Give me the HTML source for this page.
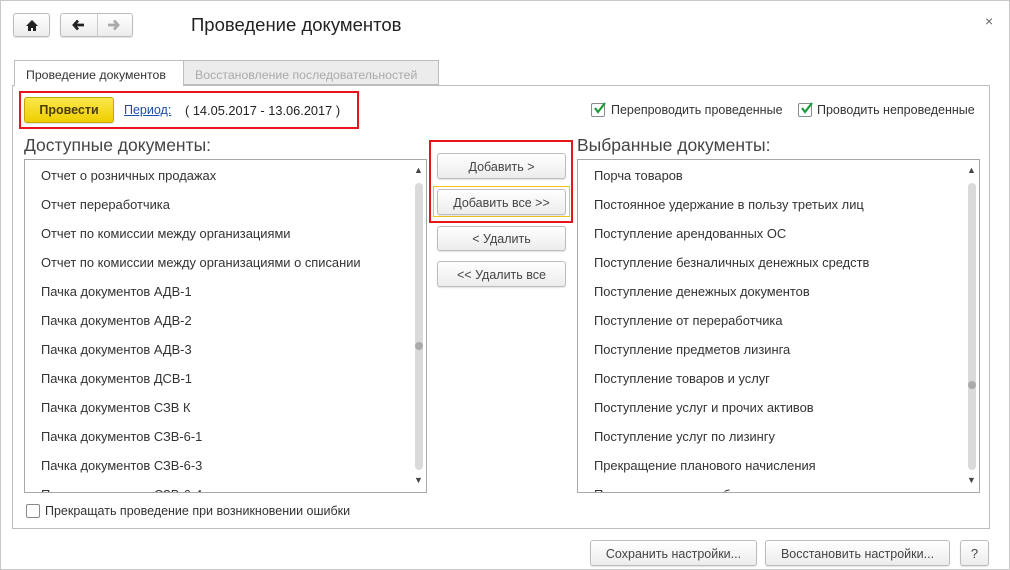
<!DOCTYPE html>
<html><head><meta charset="utf-8"><style>
*{box-sizing:border-box;margin:0;padding:0}
body{width:1010px;height:570px;background:#fff;font-family:"Liberation Sans",Arial,sans-serif;font-size:12.5px;color:#333;position:relative;overflow:hidden}
.abs{position:absolute}
.win{left:0;top:0;width:1010px;height:570px;border:1px solid #c8c8c8}
.btn{position:absolute;border:1px solid #bdbdbd;border-radius:3px;background:linear-gradient(#fff,#ececec);text-align:center;color:#444;box-shadow:0 1px 1px rgba(0,0,0,.12)}
.list{position:absolute;border:1px solid #a8a8a8;background:#fff;overflow:hidden;font-size:12.9px}
.list div{position:absolute;left:16px;white-space:nowrap;color:#333}
.sb{position:absolute;width:8px;background:#dadada;border-radius:4px}
.arr{position:absolute;font-size:9px;color:#444}
.cb{position:absolute;width:14px;height:14px;border:1px solid #8a8a8a;background:#fff;border-radius:2px}
</style></head><body>
<div class="abs win"></div>
<div class="btn" style="left:13px;top:13px;width:37px;height:24px"><svg width="14" height="13" viewBox="0 0 14 13" style="margin-top:5px"><path d="M7 1L1 7h2v5h3V9h2v3h3V7h2z" fill="#222"/></svg></div>
<div class="btn" style="left:60px;top:13px;width:73px;height:24px"></div>
<div class="abs" style="left:97px;top:14px;width:1px;height:22px;background:#ccc"></div>
<svg class="abs" style="left:71px;top:18px" width="16" height="14" viewBox="0 0 16 14"><path d="M7 2.5L3 7l4 4.5M3 7h10" stroke="#222" stroke-width="2.8" fill="none"/></svg>
<svg class="abs" style="left:105px;top:18px" width="16" height="14" viewBox="0 0 16 14"><path d="M9 2.5L13 7l-4 4.5M13 7H3" stroke="#aaa" stroke-width="2.8" fill="none"/></svg>
<div class="abs" style="left:191px;top:14px;font-size:18.5px;color:#222">Проведение документов</div>
<div class="abs" style="left:985px;top:13px;font-size:14px;color:#666">×</div>

<div class="abs" style="left:12px;top:85px;width:978px;height:444px;border:1px solid #bdbdbd"></div>
<div class="abs" style="left:14px;top:60px;width:170px;height:26px;border:1px solid #bdbdbd;border-bottom:none;background:#fff;padding:7px 0 0 11px;font-size:12.3px">Проведение документов</div>
<div class="abs" style="left:184px;top:60px;width:255px;height:25px;border:1px solid #bdbdbd;border-left:none;background:#ececec;padding:7px 0 0 11px;font-size:12.3px;color:#aaa">Восстановление последовательностей</div>

<div class="abs" style="left:19px;top:91px;width:340px;height:38px;border:2px solid #e8131b"></div>
<div class="btn" style="left:24px;top:97px;width:90px;height:26px;background:linear-gradient(#fbe84a,#efce00);border-color:#c4a800;font-weight:bold;color:#4a3d00;padding-top:5px;font-size:12.5px">Провести</div>
<div class="abs" style="left:124px;top:103px;color:#1b4fa8;text-decoration:underline">Период:</div>
<div class="abs" style="left:185px;top:103px;color:#222;font-size:12.8px">( 14.05.2017 - 13.06.2017 )</div>

<div class="cb" style="left:591px;top:103px"></div>
<svg class="abs" style="left:592px;top:101px" width="15" height="15"><path d="M3 7l3 4 7-9" stroke="#1b9a3a" stroke-width="2.2" fill="none"/></svg>
<div class="abs" style="left:611px;top:103px">Перепроводить проведенные</div>
<div class="cb" style="left:798px;top:103px"></div>
<svg class="abs" style="left:799px;top:101px" width="15" height="15"><path d="M3 7l3 4 7-9" stroke="#1b9a3a" stroke-width="2.2" fill="none"/></svg>
<div class="abs" style="left:817px;top:103px">Проводить непроведенные</div>

<div class="abs" style="left:24px;top:135px;font-size:17.5px;color:#444">Доступные документы:</div>
<div class="abs" style="left:577px;top:135px;font-size:17.5px;color:#444">Выбранные документы:</div>

<div class="list" style="left:24px;top:159px;width:403px;height:334px">
<div style="top:8px">Отчет о розничных продажах</div>
<div style="top:37px">Отчет переработчика</div>
<div style="top:66px">Отчет по комиссии между организациями</div>
<div style="top:95px">Отчет по комиссии между организациями о списании</div>
<div style="top:124px">Пачка документов АДВ-1</div>
<div style="top:153px">Пачка документов АДВ-2</div>
<div style="top:182px">Пачка документов АДВ-3</div>
<div style="top:211px">Пачка документов ДСВ-1</div>
<div style="top:240px">Пачка документов СЗВ К</div>
<div style="top:269px">Пачка документов СЗВ-6-1</div>
<div style="top:298px">Пачка документов СЗВ-6-3</div>
<div style="top:327px">Пачка документов СЗВ-6-4</div>
<span class="sb" style="left:390px;top:23px;height:287px"></span>
<span class="abs" style="left:390px;top:182px;width:8px;height:8px;border-radius:50%;background:#aaa"></span>
<span class="arr" style="left:389px;top:5px">▲</span><span class="arr" style="left:389px;top:315px">▼</span>
</div>

<div class="list" style="left:577px;top:159px;width:403px;height:334px">
<div style="top:8px">Порча товаров</div>
<div style="top:37px">Постоянное удержание в пользу третьих лиц</div>
<div style="top:66px">Поступление арендованных ОС</div>
<div style="top:95px">Поступление безналичных денежных средств</div>
<div style="top:124px">Поступление денежных документов</div>
<div style="top:153px">Поступление от переработчика</div>
<div style="top:182px">Поступление предметов лизинга</div>
<div style="top:211px">Поступление товаров и услуг</div>
<div style="top:240px">Поступление услуг и прочих активов</div>
<div style="top:269px">Поступление услуг по лизингу</div>
<div style="top:298px">Прекращение планового начисления</div>
<div style="top:327px">Прекращение переработки</div>
<span class="sb" style="left:390px;top:23px;height:287px"></span>
<span class="abs" style="left:390px;top:221px;width:8px;height:8px;border-radius:50%;background:#aaa"></span>
<span class="arr" style="left:389px;top:5px">▲</span><span class="arr" style="left:389px;top:315px">▼</span>
</div>

<div class="abs" style="left:429px;top:140px;width:144px;height:83px;border:2px solid #e8131b"></div>
<div class="abs" style="left:433px;top:186px;width:137px;height:31px;border:1px solid #f0c419"></div>
<div class="btn" style="left:437px;top:153px;width:129px;height:26px;padding-top:6px">Добавить &gt;</div>
<div class="btn" style="left:437px;top:189px;width:129px;height:26px;padding-top:6px">Добавить все &gt;&gt;</div>
<div class="btn" style="left:437px;top:226px;width:129px;height:25px;padding-top:5px">&lt; Удалить</div>
<div class="btn" style="left:437px;top:261px;width:129px;height:26px;padding-top:6px">&lt;&lt; Удалить все</div>

<div class="cb" style="left:26px;top:504px"></div>
<div class="abs" style="left:45px;top:504px">Прекращать проведение при возникновении ошибки</div>

<div class="btn" style="left:590px;top:540px;width:167px;height:26px;padding-top:6px">Сохранить настройки...</div>
<div class="btn" style="left:765px;top:540px;width:185px;height:26px;padding-top:6px">Восстановить настройки...</div>
<div class="btn" style="left:960px;top:540px;width:29px;height:26px;padding-top:5px;font-size:13px">?</div>
</body></html>
